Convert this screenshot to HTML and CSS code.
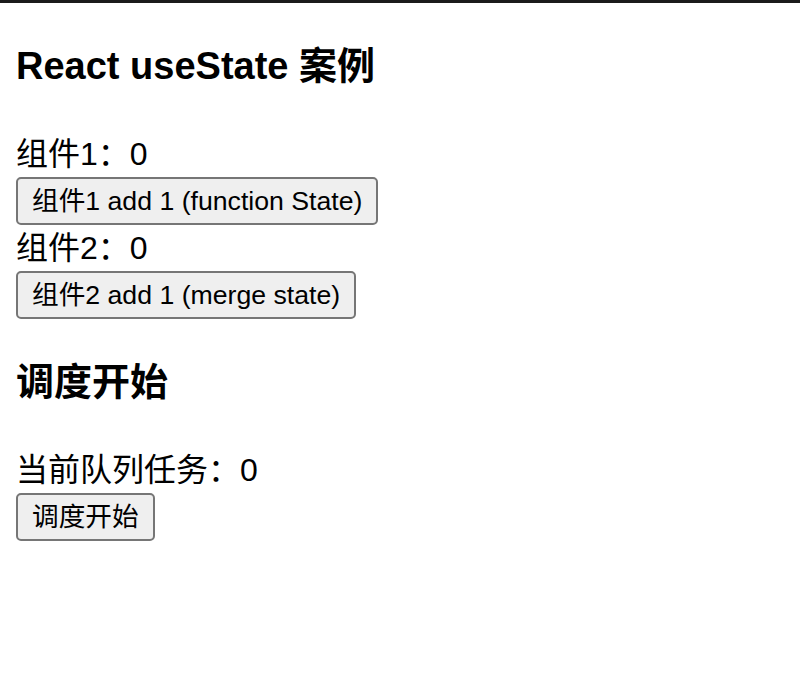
FILE: index.html
```html
<!DOCTYPE html>
<html lang="zh-CN">
<head>
<meta charset="utf-8">
<title>React useState 案例</title>
<link rel="stylesheet" href="styles.css">
</head>
<body>
<div class="topbar"></div>
<main class="page">
  <h3 class="title">React useState 案例</h3>
  <div class="line">组件1：0</div>
  <div><button class="btn">组件1 add 1 (function State)</button></div>
  <div class="line">组件2：0</div>
  <div><button class="btn">组件2 add 1 (merge state)</button></div>
  <h3 class="title">调度开始</h3>
  <div class="line">当前队列任务：0</div>
  <div><button class="btn">调度开始</button></div>
</main>
</body>
</html>
```

FILE: styles.css
```css
html, body {
  margin: 0;
  padding: 0;
  background: #ffffff;
}
body {
  font-family: "Liberation Sans", "Noto Sans CJK SC", sans-serif;
  color: #000000;
}
.topbar {
  height: 3px;
  background: #1b1b1b;
}
.page {
  padding: 0 16px;
  display: flow-root;
}
.title {
  font-size: 38px;
  font-weight: bold;
  line-height: 53px;
  margin: 37.44px 0;
}
.line {
  font-size: 32px;
  line-height: 46px;
}
.btn {
  font-family: "Liberation Sans", "Noto Sans CJK SC", sans-serif;
  font-size: 26.67px;
  height: 48px;
  line-height: 44px;
  padding: 0 14px;
  border: 2px solid #767676;
  border-radius: 5px;
  background: #efefef;
  color: #000000;
  display: block;
}
```
